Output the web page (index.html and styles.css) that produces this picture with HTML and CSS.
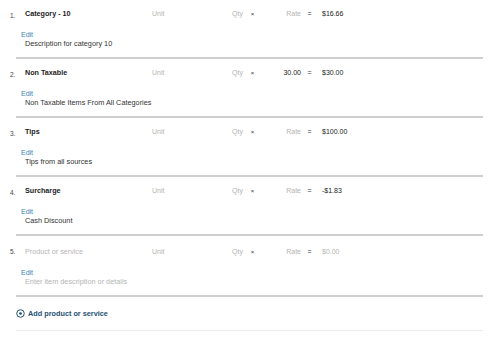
FILE: index.html
```html
<!DOCTYPE html>
<html>
<head>
    <title>Line Items</title>
    <link rel="stylesheet" href="styles.css">
</head>
<body>
    <div class="items">

        <div class="item">
            <div class="num">1.</div>
            <div class="body">
                <div class="line">
                    <div class="name">Category - 10</div>
                    <div class="unit muted">Unit</div>
                    <div class="qty muted">Qty</div>
                    <div class="times">&times;</div>
                    <div class="rate muted">Rate</div>
                    <div class="eq">=</div>
                    <div class="amount">$16.66</div>
                </div>
                <a class="edit" href="#">Edit</a>
                <div class="desc">Description for category 10</div>
            </div>
        </div>

        <div class="item">
            <div class="num">2.</div>
            <div class="body">
                <div class="line">
                    <div class="name">Non Taxable</div>
                    <div class="unit muted">Unit</div>
                    <div class="qty muted">Qty</div>
                    <div class="times">&times;</div>
                    <div class="rate">30.00</div>
                    <div class="eq">=</div>
                    <div class="amount">$30.00</div>
                </div>
                <a class="edit" href="#">Edit</a>
                <div class="desc">Non Taxable Items From All Categories</div>
            </div>
        </div>

        <div class="item">
            <div class="num">3.</div>
            <div class="body">
                <div class="line">
                    <div class="name">Tips</div>
                    <div class="unit muted">Unit</div>
                    <div class="qty muted">Qty</div>
                    <div class="times">&times;</div>
                    <div class="rate muted">Rate</div>
                    <div class="eq">=</div>
                    <div class="amount">$100.00</div>
                </div>
                <a class="edit" href="#">Edit</a>
                <div class="desc">Tips from all sources</div>
            </div>
        </div>

        <div class="item">
            <div class="num">4.</div>
            <div class="body">
                <div class="line">
                    <div class="name">Surcharge</div>
                    <div class="unit muted">Unit</div>
                    <div class="qty muted">Qty</div>
                    <div class="times">&times;</div>
                    <div class="rate muted">Rate</div>
                    <div class="eq">=</div>
                    <div class="amount">-$1.83</div>
                </div>
                <a class="edit" href="#">Edit</a>
                <div class="desc">Cash Discount</div>
            </div>
        </div>

        <!-- empty row, placeholders only -->
        <div class="item item-empty">
            <div class="num">5.</div>
            <div class="body">
                <div class="line">
                    <div class="name muted">Product or service</div>
                    <div class="unit muted">Unit</div>
                    <div class="qty muted">Qty</div>
                    <div class="times">&times;</div>
                    <div class="rate muted">Rate</div>
                    <div class="eq">=</div>
                    <div class="amount muted">$0.00</div>
                </div>
                <a class="edit" href="#">Edit</a>
                <div class="desc muted">Enter item description or details</div>
            </div>
        </div>

        <div class="add-row">
            <a class="add" href="#">
                <svg width="9" height="9" viewBox="0 0 10 10">
                    <circle cx="5" cy="5" r="4.2" fill="none" stroke="#1e4f70" stroke-width="1.1"/>
                    <circle cx="5" cy="5" r="1.5" fill="#1e4f70"/>
                </svg>
                Add product or service
            </a>
        </div>

    </div>
</body>
</html>
```

FILE: styles.css
```css
body {
    font-family: 'Liberation Sans', Arial, sans-serif;
    margin: 0;
    padding: 0;
    background: #fff;
    color: #222;
    font-size: 7px;
}

.items {
    width: 473px;
    margin-left: 10px;
}

.item {
    display: grid;
    grid-template-columns: 15px 1fr;
    height: 59px;
    grid-template-rows: 57px 2px;
}

/* separator under each row, starts a little right of the number */
.item::after {
    content: "";
    grid-column: 1 / -1;
    margin-left: 6px;
    background: #cfcfcf;
}

.item-empty {
    height: 61px;
    grid-template-rows: 59px 2px;
}

.item-empty .body {
    padding-top: 11px;
}

.num {
    padding-top: 12px;
    font-size: 6.5px;
    color: #444;
}

.body {
    padding-top: 9px;
}

.line {
    display: grid;
    grid-template-columns: 127px 60px 31px 19px 39px 17px 1fr;
    line-height: 10px;
}

.name {
    font-weight: bold;
    font-size: 7.2px;
}

.name.muted {
    font-weight: normal;
}

.muted {
    color: #b4b4b4;
}

.qty,
.rate {
    text-align: right;
}

.times,
.eq {
    text-align: center;
    color: #333;
}

.times {
    font-size: 6px;
}

.amount {
    padding-left: 4px;
}

.edit {
    display: block;
    margin-top: 12px;
    margin-left: -4px;
    color: #3a86bb;
    text-decoration: none;
    line-height: 8px;
}

.desc {
    line-height: 9px;
    font-size: 7.3px;
    color: #333;
}

.desc.muted {
    color: #b4b4b4;
}

.add-row {
    margin-left: 6px;
    height: 33px;
    border-bottom: 1px solid #ececec;
    display: flex;
    align-items: center;
}

.add {
    display: flex;
    align-items: center;
    gap: 3px;
    color: #1e4f70;
    font-weight: bold;
    font-size: 7.3px;
    text-decoration: none;
}
```
